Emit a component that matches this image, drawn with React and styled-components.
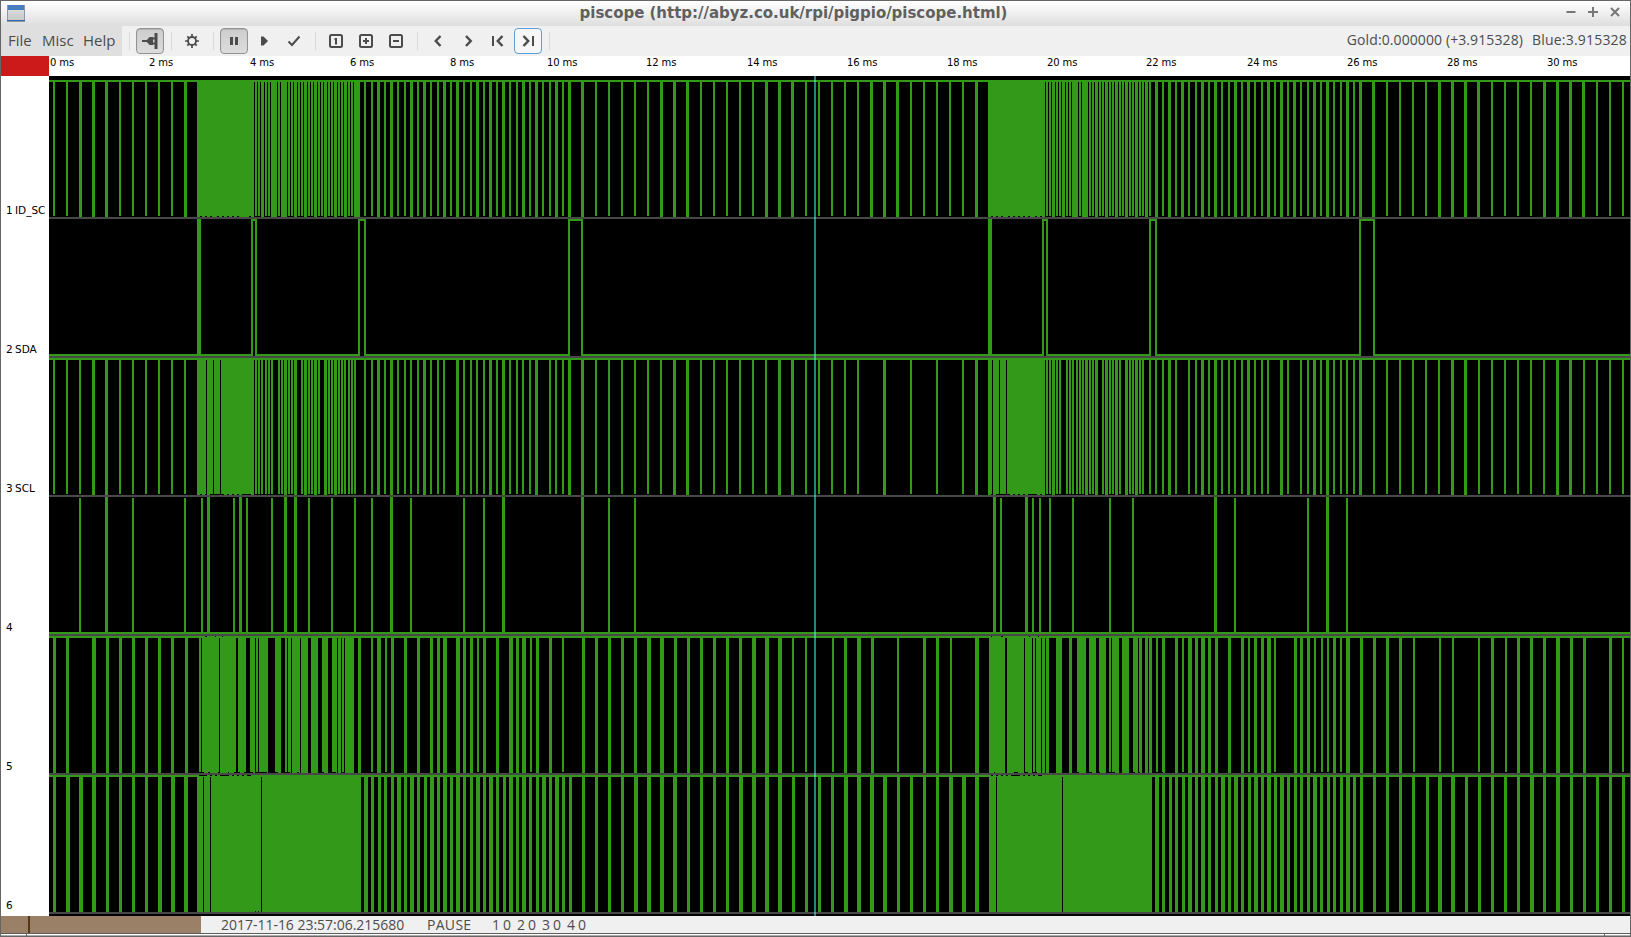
import React from "react";
import styled, { createGlobalStyle } from "styled-components";

const GREEN = "#339919";
const GREY = "#484848";

const GlobalStyle = createGlobalStyle`
  body { margin: 0; background: #fff; }
  * { box-sizing: border-box; }
`;

/* ---------- window frame ---------- */

const Window = styled.div`
  width: 1631px;
  height: 937px;
  display: flex;
  flex-direction: column;
  border: 1px solid #666;
  background: #f0f0f0;
  color: #4c4c4c;
  font-family: "Open Sans", "Noto Sans", sans-serif;
  font-size: 15px;
  overflow: hidden;
  white-space: pre;
`;

const TitleBar = styled.header`
  height: 25px;
  flex: none;
  display: flex;
  align-items: center;
  padding: 0 9px 0 6px;
  background: linear-gradient(#ffffff, #dedede);
`;

const Title = styled.h1`
  flex: 1;
  margin: 0;
  padding: 0 4px 2px 0;
  text-align: center;
  font: bold 15px/22px "DejaVu Sans", sans-serif;
  letter-spacing: ${(p) => p.$track || 0}px;
  color: #606060;
`;

const WindowButtons = styled.div`
  display: flex;
  gap: 12px;
  margin: -3px 1px 0 0;
`;

/* ---------- toolbar ---------- */

const Toolbar = styled.nav`
  height: 30px;
  flex: none;
  display: flex;
  align-items: center;
  padding-right: 3px;
`;

const Menu = styled.div`
  width: 121px;
  margin-right: 1px;
  height: 30px;
  display: flex;
  padding-left: 7px;
  line-height: 29px;
  background: #dfdfdf;
`;

const MenuItem = styled.span`
  width: ${(p) => p.$w}px;
`;

const Separator = styled.i`
  width: 1px;
  height: 18px;
  margin: 0 5px 0 6px;
  background: #d8d8d8;
`;

const ToolButton = styled.button`
  width: 28px;
  height: 26px;
  margin: 0 1px;
  padding: 0;
  display: flex;
  align-items: center;
  justify-content: center;
  border: 1px solid ${(p) => (p.$pressed ? "#939393" : p.$focus ? "#5e9fd8" : "transparent")};
  border-radius: 4px;
  background: ${(p) => (p.$pressed ? "linear-gradient(#cdcdcd, #dcdcdc)" : p.$focus ? "#f6f6f6" : "none")};
  box-shadow: ${(p) => (p.$pressed ? "inset 0 1px 1px #b4b4b4" : "none")};
  color: #4c4c4c;
`;

const Readout = styled.div`
  margin-left: auto;
  padding-bottom: 2px;
  display: flex;
  gap: 9px;
  font-size: 14px;
  line-height: 28px;
`;

const ReadoutValue = styled.span`
  letter-spacing: ${(p) => p.$track || 0}px;
`;

/* ---------- time ruler ---------- */

const Ruler = styled.div`
  height: 20px;
  flex: none;
  display: flex;
  background: #fff;
  color: #000;
  font: 10px/12px "DejaVu Sans", sans-serif;
  word-spacing: -0.3px;
`;

const TriggerBox = styled.div`
  width: 48px;
  margin-right: 1px;
  flex: none;
  background: #cc1919;
`;

const Tick = styled.span`
  width: ${(p) => p.$w}px;
  flex: none;
  padding-top: 1px;
`;

/* ---------- scope ---------- */

const Scope = styled.main`
  height: 840px;
  flex: none;
  position: relative;
  padding: 4px 0 2px;
  background: linear-gradient(90deg, #fff 48px, #000 48px);
`;

const Channel = styled.section`
  height: 139px;
  display: flex;
`;

const ChannelLabel = styled.div`
  width: 48px;
  flex: none;
  display: flex;
  align-items: flex-end;
  padding: 0 0 3px 5px;
  color: #000;
  font: 10.5px/12px "DejaVu Sans", sans-serif;
  word-spacing: -1px;
`;

const Lane = styled.div`
  width: 1581px;
  border-bottom: 2px solid ${GREY};
`;

const Wave = styled.svg`
  display: block;
  shape-rendering: crispEdges;
`;

const Cursor = styled.div`
  position: absolute;
  top: 0;
  bottom: 0;
  left: 813px;
  width: 2px;
  background: rgba(85, 255, 255, 0.5);
`;

/* ---------- status bar ---------- */

const StatusBar = styled.footer`
  height: 17px;
  flex: none;
  display: flex;
  font-size: 14px;
  line-height: 17px;
`;

const BufferBar = styled.div`
  width: 200px;
  margin-right: 20px;
  padding-left: 27px;
  background: #9a8066;
`;

const BufferMark = styled.i`
  display: block;
  width: 2px;
  height: 17px;
  background: #553818;
`;

const StatusText = styled.span`
  width: ${(p) => p.$w}px;
  letter-spacing: ${(p) => p.$track || 0}px;
`;

const Grip = styled.div`
  height: 3px;
  flex: none;
  display: flex;
  justify-content: space-between;
  padding: 0 25px;
  border-top: 1px solid #5e5e5e;
  background: linear-gradient(#fff 1px, #aaa 1px);
`;

const GripNotch = styled.i`
  width: 1px;
  height: 2px;
  background: #666;
`;

/* Pulses are "x" or "x:width", in window pixels; the default width is 2. */
const CH1_DENSE =
  "1046 1049 1052:3 1056 1059 1062:3 1066 1069 1072:6 1079 1082:6 1089 1092 1095:3 1099 1102 1105:3 1109 1112 1115:3 1119 1122 1125:3 1129 1132 1135:3 1139 1142 1145:3 1149";
const CH1_MID =
  "1155:3 1162 1168:3 1175 1181:3 1188 1195 1201:3 1208 1214:3 1221 1228 1234:3 1241 1247:3 1254 1261 1267:3 1274 1280:3 1287 1293:3 1300 1307 1313:3 1320 1326:3 1333 1340 1346:3 1353 1359:3";

const parse = (s, shift = 0) =>
  s.split(" ").filter(Boolean).map((t) => {
    const [x, w = 2] = t.split(":").map(Number);
    return [x + shift, w];
  });

const CHANNELS = [
  {
    label: "1 ID_SC",
    idle: "high",
    pulses: [
      ...parse("53 66 79:3 92:3 105:3 119 132 145 158 171 184:3 197:57 255 258 261:3 265 268 271:6 278 281:6 288 291 294:3 298 301 304:3 308 311 314:3 318 321 324:3 328 331 334:3 338 341 344:3 348 351 354:6"),
      ...parse(CH1_MID.replace("1155:3", "1155"), -791),
      ...parse("581:3 595 608 621 634 647 660:3 673:3 686:3 700 713 726 739 752 765:3 778:3 791:3 805 818 831 844 857 870:3 883:3 896:3 910 923 936 949 962 975:3 988:57"),
      ...parse(CH1_DENSE),
      ...parse(CH1_MID),
      ...parse("1372:3 1386 1399 1412 1425 1438:3 1451:3 1464:3 1477:3 1491 1504 1517 1530 1543:3 1556:3 1569:3 1582:3 1596 1609 1622"),
    ],
    footGaps: "200 205 210 217 222 227 232 237 249 991 996 1001 1008 1013 1018 1023 1028 1035 1040",
  },
  {
    label: "2 SDA",
    idle: "low",
    pulses: parse("197:4 988:4"),
    plateaus: [[251, 257], [358, 366], [568, 583], [1042, 1048], [1149, 1157], [1359, 1375]],
  },
  {
    label: "3 SCL",
    idle: "high",
    pulses: parse(
      "53 66 79 92:3 105:3 119 132 145 158 171 184 197:9 207:6 214:6 221:33 255 258 261 265 268 271 278 281 284:3 288 291 294:3 301 304:3 308 311 314:3 318 324:3 328 331 334:3 338 341 344 348 351 354 364 371 377:3 384 390:3 397 404 410 417 423:3 430 437 443 456:3 463 470 476 483 489:3 496 502:3 509 516 522 529 535:3 549 555 562 568:3 581:3 595 608 621 634 647 660 673:3 686:3 700 713 726 739 752 765 778:3 791:3 805 818 831 844 857 883:3 910 936 962 975:3 988:4 993:6 1000:6 1007:38 1046 1049 1052:3 1056 1059 1066 1069 1072 1076 1079 1082 1085:3 1089 1092 1095:3 1102 1105:3 1109 1112 1115:3 1119 1125:3 1129 1132 1135:3 1139 1142 1149 1155 1162 1168:3 1175 1188 1195 1201:3 1208 1214:3 1221 1228 1234 1241 1247:3 1254 1261 1267 1280:3 1287 1300 1307 1313:3 1320 1326:3 1333 1340 1346 1353 1359:3 1373 1386 1399 1412 1425 1438 1451:3 1464:3 1478 1491 1504 1517 1530 1543 1556:3 1569:3 1583 1596 1609 1622"
    ),
    footGaps: "200 205 210:14 227 232 237 242:9 991 996:14 1013 1018 1023 1028:9 1040",
  },
  {
    label: "4",
    idle: "low",
    pulses: parse(
      "79 105:3 132 184 201 207:3 233 239:3 246 271 284:3 294:3 308 331 354 371 390:3 410 463 483 502:3 581:3 608 634 993:3 1000 1025:3 1032 1039 1049 1072 1109 1132 1214:3 1234 1307 1326:3 1346"
    ),
  },
  {
    label: "5",
    idle: "high",
    pulses: parse(
      "53:3 66:3 92:4 106:3 119:3 132:3 145:3 158:3 171:3 185:3 199 202:17 220:16 238:8 250:5 256 259:9 275:6 285 288:3 292:8 301:7 311:7 322:6 332:5 338:3 342 345:9 358:3 371 377:4 385 391:3 404:3 417:3 430:3 437:3 443:4 456:4 463:3 470:3 477 483:3 496:3 509:4 516:3 522:4 530 536:3 549:3 562 582:3 595:3 608:3 621:3 634:3 647:4 660:4 674:3 687:3 700:3 713:3 726:3 739:3 752:4 765:4 778:4 792 805 832 844:3 857:4 871:3 897 923:3 936:3 950 975:4 989:16 1007:17 1025:7 1033 1036:5 1042:3 1046:3 1056:6 1069:3 1077:9 1089:7 1099:7 1109 1112:7 1122:7 1133:5 1139:3 1145:3 1149:3 1156 1162:3 1175:3 1182 1188:4 1195:3 1201:4 1208:3 1215:3 1228:3 1241:3 1248 1254:3 1261:3 1267:4 1274 1294:3 1300:3 1307:3 1314 1321 1327 1333:3 1340 1346:4 1360:3 1373:3 1386:3 1399:3 1413 1439 1452 1478 1491:3 1505 1517:3 1530:3 1543:3 1556:4 1570:3 1583:3 1609:3 1622"
    ),
    headGaps: "205 215:1 222:1 991:1 1001 1029:1 1038:1",
    footGaps: "202 208 218 228:1 234:6 244 250:3 258:9 275:3 286:4 297 322 332:4 994:1 1014:4 1025:3 1033:4 1077 1089:3 1099:1 1109:6 1133 1139:1 1162:1",
  },
  {
    label: "6",
    idle: "high",
    pulses: parse(
      "53:3 66:4 79:4 92:4 106:3 119:3 132:3 145:3 158:4 171:4 184:4 197:6 204:6 211:50 262:99 364:4 371:3 378:3 384:3 391:3 397:4 404:3 410:4 417:3 424:3 430:4 437:3 443:4 450:3 456:4 463:3 470:3 476:4 483:3 489:4 496:3 503:3 509:4 516:3 522:4 529:3 536:3 542:4 549:3 555:4 562:3 569:3 582:3 595:3 608:3 621:3 634:4 647:4 660:4 673:4 687:3 700:3 713:3 726:3 739:4 752:4 765:4 778:4 792:3 805:3 818:3 831:3 844:4 857:4 870:4 883:4 897:3 910:3 923:3 936:3 949:4 962:4 975:4 989:7 997:65 1063:89 1155:4 1162:3 1169:3 1175:3 1182:3 1188:4 1195:3 1201:4 1208:3 1215:3 1221:4 1228:3 1234:4 1241:3 1248:3 1254:4 1261:3 1267:4 1274:3 1280:4 1287:3 1294:3 1300:3 1307:3 1313:4 1320:3 1327:3 1333:3 1340:3 1346:4 1353:3 1360:3 1373:3 1386:3 1399:3 1412:3 1426:3 1438:4 1451:4 1465:3 1478:3 1491:3 1504:3 1517:3 1530:4 1543:3 1556:4 1570:3 1583:3 1596:3 1609:3 1622:3"
    ),
    headGaps: "199:8 210 215 220:9 232 237 242 247:4 991 996 1001 1006 1011:9 1023 1028 1033 1038:4",
    footGaps: "255:1 258:1",
  },
];

const rect = (x, y, w, h) => `M${x} ${y}h${w}v${h}h${-w}z`;

function Waveform({ idle, pulses, plateaus = [], headGaps = "", footGaps = "" }) {
  const parts = [];
  if (idle === "high") {
    parts.push(rect(49, 0, 1581, 2));
  } else {
    let from = 49;
    plateaus.forEach(([a, b]) => {
      parts.push(rect(from, 135, a + 2 - from, 2), rect(a, 0, b - a, 2), rect(a, 2, 2, 133), rect(b - 2, 2, 2, 133));
      from = b - 2;
    });
    parts.push(rect(from, 135, 1630 - from, 2));
  }
  pulses.forEach(([x, w]) => {
    const thin = w < 3;
    const top = idle === "low" ? (thin ? 1 : 0) : 2;
    const bottom = idle === "low" ? 135 : thin ? 136 : 137;
    parts.push(rect(x, top, w, bottom - top));
  });
  const gaps = [
    ...parse(headGaps).map(([x, w]) => rect(x, 0, w, 1)),
    ...parse(footGaps).map(([x, w]) => rect(x, 136, w, 1)),
  ];
  return (
    <Wave width="1581" height="137" viewBox="49 0 1581 137">
      <path fill={GREEN} d={parts.join("")} />
      <path fill="#000" d={gaps.join("")} />
    </Wave>
  );
}

const TICKS = [99, 101, 100, 100, 97, 99, 101, 100, 100, 100, 99, 101, 100, 100, 100, 60];

/* ---------- icons ---------- */

const Icon = ({ children, w = 16 }) => (
  <svg width={w} height="16" viewBox={`0 0 ${w} 16`} fill="none" stroke="currentColor" strokeWidth="2">
    {children}
  </svg>
);

const Connect = () => (
  <Icon>
    <path d="M0 8h5" />
    <path d="M4 8L7.500 4H11v8H7.500z" fill="currentColor" stroke="none" />
    <path d="M10 5.500h4M10 10.500h4" />
    <path d="M14 0v16" strokeWidth="3" />
  </Icon>
);
const Gear = () => (
  <Icon>
    <circle cx="8" cy="8" r="4" strokeWidth="1.8" />
    <path d="M8 1v3M8 12v3M1 8h3M12 8h3M3.300 3.300l2 2M10.700 10.700l2 2M12.700 3.300l-2 2M5.300 10.700l-2 2" strokeWidth="1.7" />
  </Icon>
);
const Pause = () => (
  <Icon><path d="M5.500 4v8M10.500 4v8" strokeWidth="3" /></Icon>
);
const Play = () => (
  <Icon><path d="M5 3.500h2.500L12 8l-4.500 4.500H5z" fill="currentColor" stroke="none" /></Icon>
);
const Check = () => (
  <Icon><path d="M2.500 8.500l3.500 3.500 7.500-8.500" /></Icon>
);
const Boxed = ({ d }) => (
  <Icon>
    <rect x="2" y="2" width="12" height="12" rx="1.500" />
    <path d={d} />
  </Icon>
);
const Left = () => (
  <Icon><path d="M10.500 3L5.800 8l4.700 5" strokeWidth="2.500" /></Icon>
);
const Right = () => (
  <Icon><path d="M6 3l4.700 5L6 13" strokeWidth="2.500" /></Icon>
);
const First = () => (
  <Icon><path d="M3 3v10" /><path d="M12.500 3L7.800 8l4.700 5" strokeWidth="2.500" /></Icon>
);
const Last = () => (
  <Icon><path d="M13 3v10" /><path d="M3.500 3l4.700 5-4.700 5" strokeWidth="2.500" /></Icon>
);

const AppIcon = () => (
  <svg width="18" height="17" viewBox="0 0 18 17">
    <defs>
      <linearGradient id="pane" x1="0" y1="0" x2="0" y2="1">
        <stop offset="0" stopColor="#e4e4e2" />
        <stop offset="1" stopColor="#c3c6c8" />
      </linearGradient>
    </defs>
    <rect x="0.500" y="0.500" width="17" height="16" fill="url(#pane)" stroke="#8b98aa" />
    <rect x="1" y="0" width="16" height="5" fill="#4a7cc0" />
    <rect x="0" y="15" width="18" height="1" fill="#3c66a0" />
  </svg>
);

const WinIcon = ({ d }) => (
  <svg width="10" height="10" viewBox="0 0 10 10" fill="none" stroke="#777" strokeWidth="2">
    <path d={d} />
  </svg>
);

export default function App() {
  return (
    <>
      <GlobalStyle />
      <Window>
        <TitleBar>
          <AppIcon />
          <Title $track={-0.02}>piscope (http://abyz.co.uk/rpi/pigpio/piscope.html)</Title>
          <WindowButtons>
            <WinIcon d="M0.500 5h9" />
            <WinIcon d="M0 5h10M5 0v10" />
            <WinIcon d="M1 1l8 8M9 1l-8 8" />
          </WindowButtons>
        </TitleBar>

        <Toolbar>
          <Menu>
            <MenuItem $w={34}>File</MenuItem>
            <MenuItem $w={41}>Misc</MenuItem>
            <MenuItem $w={35}>Help</MenuItem>
          </Menu>
          <Separator />
          <ToolButton $pressed><Connect /></ToolButton>
          <Separator />
          <ToolButton><Gear /></ToolButton>
          <Separator />
          <ToolButton $pressed><Pause /></ToolButton>
          <ToolButton><Play /></ToolButton>
          <ToolButton><Check /></ToolButton>
          <Separator />
          <ToolButton><Boxed d="M6.500 6H8v5.500" /></ToolButton>
          <ToolButton><Boxed d="M8 5v6M5 8h6" /></ToolButton>
          <ToolButton><Boxed d="M5 8h6" /></ToolButton>
          <Separator />
          <ToolButton><Left /></ToolButton>
          <ToolButton><Right /></ToolButton>
          <ToolButton><First /></ToolButton>
          <ToolButton $focus><Last /></ToolButton>
          <Separator />
          <Readout>
            <ReadoutValue $track={0.1}>Gold:0.000000 (+3.915328)</ReadoutValue>
            <ReadoutValue $track={0.2}>Blue:3.915328</ReadoutValue>
          </Readout>
        </Toolbar>

        <Ruler>
          <TriggerBox />
          {TICKS.map((w, i) => (
            <Tick key={i} $w={w}>{`${i * 2} ms`}</Tick>
          ))}
        </Ruler>

        <Scope>
          {CHANNELS.map(({ label, ...wave }) => (
            <Channel key={label}>
              <ChannelLabel>{label}</ChannelLabel>
              <Lane>
                <Waveform {...wave} />
              </Lane>
            </Channel>
          ))}
          <Cursor />
        </Scope>

        <StatusBar>
          <BufferBar><BufferMark /></BufferBar>
          <StatusText $w={206} $track={-0.02}>2017-11-16 23:57:06.215680</StatusText>
          <StatusText $w={65} $track={0.3}>PAUSE</StatusText>
          <StatusText $w={120} $track={-0.38}>1 0  2 0  3 0  4 0</StatusText>
        </StatusBar>
        <Grip><GripNotch /><GripNotch /></Grip>
      </Window>
    </>
  );
}
